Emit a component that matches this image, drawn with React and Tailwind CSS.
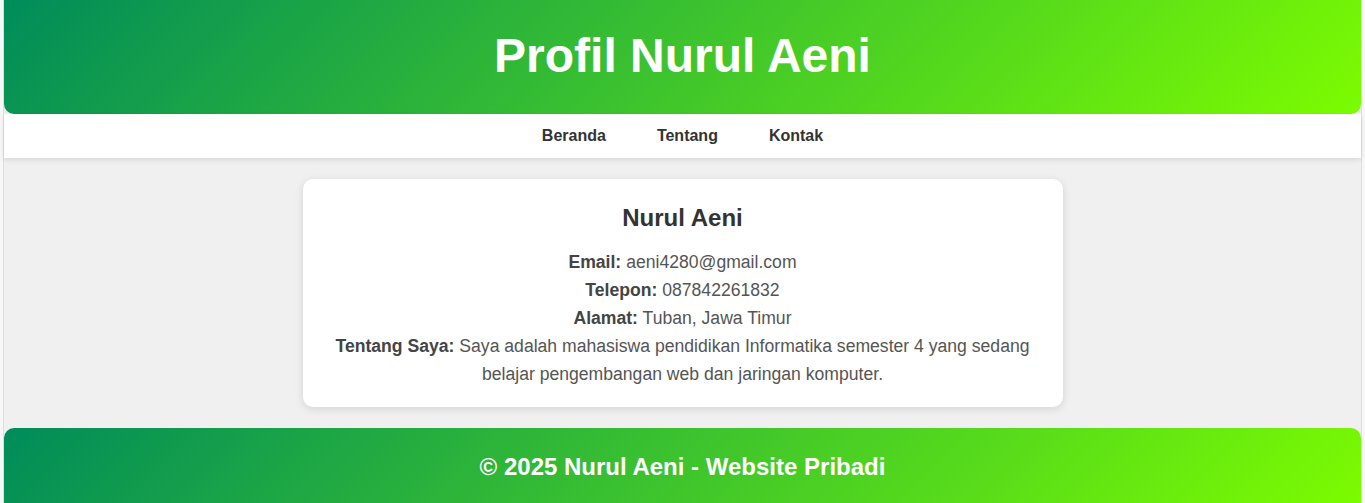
import React from 'react';

const info = [
  { label: 'Email:', value: 'aeni4280@gmail.com' },
  { label: 'Telepon:', value: '087842261832' },
  { label: 'Alamat:', value: 'Tuban, Jawa Timur' },
];

export default function App() {
  return (
    <div className="min-h-screen bg-[#f7f7f7] px-[3px] font-['Liberation_Sans',Arial,sans-serif]">
      <div className="min-h-screen border-x border-[#dedede] bg-[#f0f0f0]">
        {/* Header */}
        <header className="h-[114px] rounded-b-[10px] bg-[linear-gradient(135deg,#008c5a,#7cfc00)] flex items-center justify-center">
          <h1 className="text-[48px] font-bold text-white leading-none pb-[2px]">Profil Nurul Aeni</h1>
        </header>

        {/* Nav */}
        <nav className="h-[44px] bg-white shadow-[0_2px_5px_rgba(0,0,0,0.1)] flex items-center justify-center gap-[51px]">
          {['Beranda', 'Tentang', 'Kontak'].map((item) => (
            <a key={item} href="#" className="text-[16px] font-bold text-[#333]">
              {item}
            </a>
          ))}
        </nav>

        {/* Card */}
        <main className="pt-[21px] pb-[21px]">
          <div className="w-[760px] mx-auto bg-white rounded-[10px] shadow-[0_2px_8px_rgba(0,0,0,0.12)] pt-[25px] pb-[19px] px-[20px] text-center">
            <h2 className="text-[24px] font-bold text-[#333] leading-[28px] mb-[16px]">Nurul Aeni</h2>
            <div className="text-[17.6px] leading-[28px] text-[#555]">
              {info.map((row) => (
                <p key={row.label}>
                  <strong className="text-[#444]">{row.label}</strong> {row.value}
                </p>
              ))}
              <p>
                <strong className="text-[#444]">Tentang Saya:</strong> Saya adalah mahasiswa pendidikan Informatika semester 4 yang sedang belajar pengembangan web dan jaringan komputer.
              </p>
            </div>
          </div>
        </main>

        {/* Footer */}
        <footer className="rounded-t-[10px] bg-[linear-gradient(135deg,#008c5a,#7cfc00)] pt-[25px] pb-[25px] text-center">
          <p className="text-[24px] font-bold text-white leading-[28px]">© 2025 Nurul Aeni - Website Pribadi</p>
        </footer>
      </div>
    </div>
  );
}
